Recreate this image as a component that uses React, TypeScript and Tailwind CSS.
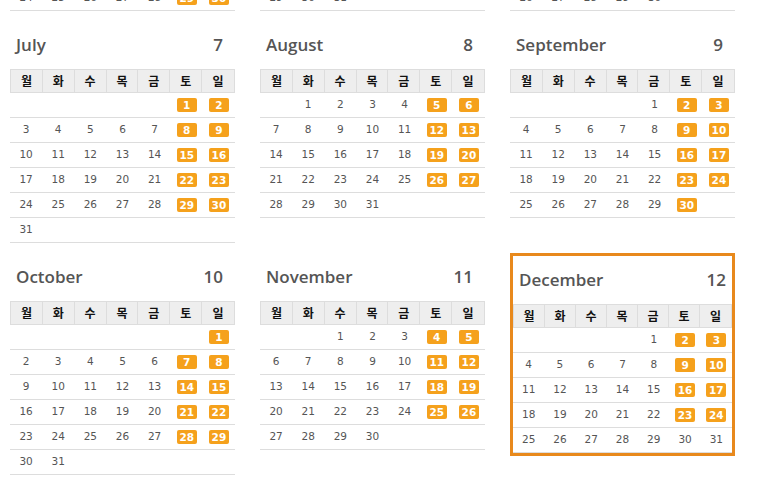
import React from "react";

const YEAR = 2023;
const MONTHS = [
  "January", "February", "March", "April", "May", "June",
  "July", "August", "September", "October", "November", "December",
];
const WEEKDAYS = ["월", "화", "수", "목", "금", "토", "일"];
const SELECTED = 11;

function weeksOf(month: number): (number | null)[][] {
  const first = (new Date(YEAR, month, 1).getDay() + 6) % 7;
  const days = new Date(YEAR, month + 1, 0).getDate();
  const cells: (number | null)[] = [];
  for (let i = 0; i < first; i++) cells.push(null);
  for (let d = 1; d <= days; d++) cells.push(d);
  while (cells.length % 7) cells.push(null);
  const rows: (number | null)[][] = [];
  for (let i = 0; i < cells.length; i += 7) rows.push(cells.slice(i, i + 7));
  return rows;
}

function isMarked(month: number, day: number, col: number) {
  if (col < 5) return false;
  if (month === 11 && day >= 30) return false;
  return true;
}

function MonthBlock({ month }: { month: number }) {
  const selected = month === SELECTED;
  const weeks = weeksOf(month);
  return (
    <div
      className={`box-border w-[225px] self-start ${
        selected ? "border-[3px] border-[#e8891c]" : ""
      }`}
    >
      <div
        className={`flex h-[48px] items-center justify-between pl-[6px] font-['Open_Sans',sans-serif] text-[17px] font-semibold text-[#555] ${
          selected ? "pr-[6px]" : "pr-[12px]"
        }`}
      >
        <span>{MONTHS[month]}</span>
        <span>{month + 1}</span>
      </div>
      <div className="grid h-[24px] grid-cols-7 border border-[#dddddd] bg-[#eeeeee]">
        {WEEKDAYS.map((w, i) => (
          <div
            key={w}
            className={`flex items-center justify-center font-['Noto_Sans_CJK_KR',sans-serif] text-[12px] font-bold text-[#111] ${
              i < 6 ? "border-r border-[#dddddd]" : ""
            }`}
          >
            {w}
          </div>
        ))}
      </div>
      {weeks.map((week, r) => (
        <div key={r} className="grid h-[25px] grid-cols-7 border-b border-[#dddddd]">
          {week.map((d, i) => (
            <div
              key={i}
              className="flex items-center justify-center font-['DejaVu_Sans',sans-serif] text-[10.5px] text-[#555]"
            >
              {d !== null &&
                (isMarked(month, d, i) ? (
                  <span className="inline-block h-[14px] w-[20px] rounded-[2px] bg-[#f5a11c] text-center text-[10.5px] font-bold leading-[14px] text-white">
                    {d}
                  </span>
                ) : (
                  <span>{d}</span>
                ))}
            </div>
          ))}
        </div>
      ))}
    </div>
  );
}

export default function App() {
  return (
    <div className="h-[501px] w-[773px] overflow-hidden bg-white">
      <div className="mt-[-186px] grid grid-cols-[225px_225px_225px] gap-x-[25px] gap-y-[10px] pl-[10px]">
        {[3, 4, 5, 6, 7, 8, 9, 10, 11].map((m) => (
          <MonthBlock key={m} month={m} />
        ))}
      </div>
    </div>
  );
}
